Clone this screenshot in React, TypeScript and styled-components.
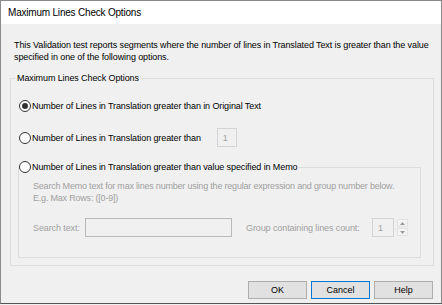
import React from 'react';
import styled, { createGlobalStyle } from 'styled-components';

const GlobalStyle = createGlobalStyle`
  html, body {
    margin: 0;
    padding: 0;
    background: #f0f0f0;
  }
  body {
    font-family: "Liberation Sans", Arial, sans-serif;
  }
`;

const Window = styled.div`
  width: 442px;
  height: 304px;
  box-sizing: border-box;
  border: 1px solid #8a8a8a;
  border-bottom-color: #555;
  display: flex;
  flex-direction: column;
  background: #f0f0f0;
  overflow: hidden;
`;

const TitleBar = styled.div`
  height: 23px;
  flex: none;
  background: #fff;
  display: flex;
  align-items: center;
  padding-left: 7px;
  font-size: 10px;
  letter-spacing: -0.2px;
  color: #000;
`;

const Body = styled.div`
  flex: 1;
  display: flex;
  flex-direction: column;
  padding: 15px 7px 0 9px;
  font-size: 9px;
  letter-spacing: -0.1px;
  line-height: 12px;
  color: #000;
  white-space: nowrap;
`;

const Description = styled.p`
  margin: 0 0 9px 4px;
`;

const GroupBox = styled.fieldset`
  margin: 0;
  padding: 15px 12px 7px 7px;
  border: 1px solid #dcdcdc;
  min-width: 0;
`;

const GroupLabel = styled.legend`
  margin-left: -3px;
  padding: 0 2px;
  line-height: 12px;
`;

const OptionRow = styled.div<{ $height: number; $gap: number }>`
  display: flex;
  align-items: center;
  height: ${p => p.$height}px;
  margin-bottom: ${p => p.$gap}px;
  padding-left: 1px;
`;

const RadioLabel = styled.label`
  display: flex;
  align-items: center;
  gap: 1px;
`;

const RadioCircle = styled.span<{ $checked?: boolean }>`
  width: 12px;
  height: 12px;
  box-sizing: border-box;
  border: 1px solid #333;
  border-radius: 50%;
  background: #fff;
  display: flex;
  align-items: center;
  justify-content: center;

  &::after {
    content: '';
    width: 6px;
    height: 6px;
    border-radius: 50%;
    background: ${p => (p.$checked ? '#333' : 'transparent')};
  }
`;

const TextBox = styled.div<{ $width: number; $offset?: number }>`
  width: ${p => p.$width}px;
  height: 19px;
  margin-left: ${p => p.$offset ?? 0}px;
  box-sizing: border-box;
  border: 1px solid #d4d4d4;
  background: #f0f0f0;
  color: #a0a0a0;
  display: flex;
  align-items: center;
  padding-left: 5px;
  flex: none;
`;

const MemoBox = styled.fieldset`
  margin: 0;
  padding: 6px 0 20px 0;
  border: 1px solid #dcdcdc;
  min-width: 0;
`;

const MemoLegend = styled.legend`
  padding: 0 2px 0 0;
  height: 14px;
  display: flex;
  align-items: center;
`;

const MemoContent = styled.div`
  padding-left: 14px;
  color: #a0a0a0;
`;

const Hint = styled.p`
  margin: 0 0 14px;
  letter-spacing: -0.2px;
`;

const SearchRow = styled.div`
  display: flex;
  align-items: center;
  height: 19px;
`;

const FieldLabel = styled.span<{ $width: number }>`
  width: ${p => p.$width}px;
  flex: none;
`;

const SearchBox = styled(TextBox)`
  border-color: #b9b9b9;
  margin-right: 14px;
`;

const Spinner = styled.div`
  display: flex;
  flex-direction: column;
  gap: 1px;
  margin-left: 3px;
`;

const SpinButton = styled.div`
  width: 11px;
  height: 8px;
  box-sizing: border-box;
  border: 1px solid #e2e2e2;
  background: #f4f4f4;
  display: flex;
  align-items: center;
  justify-content: center;
`;

const ButtonRow = styled.div`
  display: flex;
  justify-content: flex-end;
  gap: 4px;
  margin-top: 15px;
  margin-right: 1px;
`;

const Button = styled.button<{ $focused?: boolean }>`
  width: 59px;
  height: 18px;
  padding: 0;
  box-sizing: border-box;
  border: 1px solid ${p => (p.$focused ? '#0078d7' : '#adadad')};
  background: #e1e1e1;
  font-family: inherit;
  font-size: 9px;
  color: #000;
`;

const Arrow = ({ up }: { up?: boolean }) => (
  <svg width="5" height="3" viewBox="0 0 5 3">
    <path d={up ? 'M0 3 L2.5 0 L5 3 Z' : 'M0 0 L2.5 3 L5 0 Z'} fill="#9a9a9a" />
  </svg>
);

const Radio = ({ checked, children }: { checked?: boolean; children: React.ReactNode }) => (
  <RadioLabel>
    <RadioCircle $checked={checked} />
    <span>{children}</span>
  </RadioLabel>
);

const App = () => {
  return (
    <Window>
      <GlobalStyle />
      <TitleBar>Maximum Lines Check Options</TitleBar>
      <Body>
        <Description>
          This Validation test reports segments where the number of lines in Translated Text is greater than the value
          <br />
          specified in one of the following options.
        </Description>
        <GroupBox>
          <GroupLabel>Maximum Lines Check Options</GroupLabel>
          <OptionRow $height={14} $gap={15}>
            <Radio checked>Number of Lines in Translation greater than in Original Text</Radio>
          </OptionRow>
          <OptionRow $height={19} $gap={13}>
            <Radio>Number of Lines in Translation greater than</Radio>
            <TextBox $width={20} $offset={16}>1</TextBox>
          </OptionRow>
          <MemoBox>
            <MemoLegend>
              <Radio>Number of Lines in Translation greater than value specified in Memo</Radio>
            </MemoLegend>
            <MemoContent>
              <Hint>
                Search Memo text for max lines number using the regular expression and group number below.
                <br />
                E.g. Max Rows: ([0-9])
              </Hint>
              <SearchRow>
                <FieldLabel $width={52}>Search text:</FieldLabel>
                <SearchBox $width={147} />
                <FieldLabel $width={126}>Group containing lines count:</FieldLabel>
                <TextBox $width={22}>1</TextBox>
                <Spinner>
                  <SpinButton><Arrow up /></SpinButton>
                  <SpinButton><Arrow /></SpinButton>
                </Spinner>
              </SearchRow>
            </MemoContent>
          </MemoBox>
        </GroupBox>
        <ButtonRow>
          <Button>OK</Button>
          <Button $focused>Cancel</Button>
          <Button>Help</Button>
        </ButtonRow>
      </Body>
    </Window>
  );
};

export default App;
